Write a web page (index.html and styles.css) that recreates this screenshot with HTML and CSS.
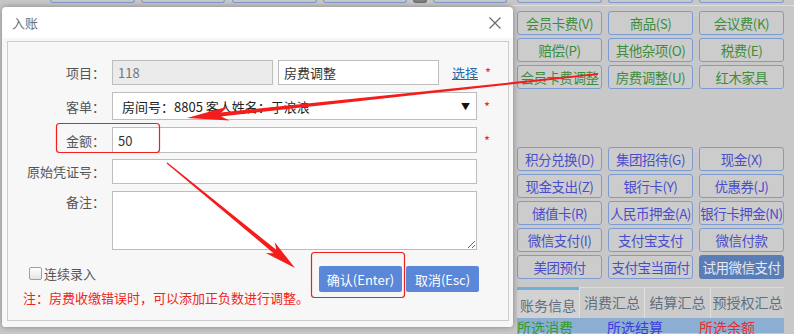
FILE: index.html
```html
<!DOCTYPE html>
<html lang="zh-CN">
<head>
    <meta charset="UTF-8">
    <meta name="viewport" content="width=device-width, initial-scale=1.0">
    <title>入账</title>
    <link rel="stylesheet" href="styles.css">
</head>
<body>
    <!-- Background app -->
    <div class="app">
        <div class="app-left">
            <div class="top-strip">
                <span class="stub w85"></span>
                <span class="stub w84"></span>
                <span class="stub w85 gap7"></span>
                <span class="stub w84"></span>
                <span class="stub dark"></span>
                <span class="stub w74"></span>
            </div>
        </div>

        <div class="app-right">
            <div class="stub-grid">
                <span class="stub"></span>
                <span class="stub"></span>
                <span class="stub"></span>
            </div>
            <div class="divider"></div>

            <div class="btn-grid green">
                <div class="pad-btn">会员卡费(V)</div>
                <div class="pad-btn">商品(S)</div>
                <div class="pad-btn">会议费(K)</div>
                <div class="pad-btn">赔偿(P)</div>
                <div class="pad-btn">其他杂项(O)</div>
                <div class="pad-btn">税费(E)</div>
                <div class="pad-btn">会员卡费调整</div>
                <div class="pad-btn">房费调整(U)</div>
                <div class="pad-btn">红木家具</div>
            </div>

            <div class="btn-grid blue pay-grid">
                <div class="pad-btn">积分兑换(D)</div>
                <div class="pad-btn">集团招待(G)</div>
                <div class="pad-btn">现金(X)</div>
                <div class="pad-btn">现金支出(Z)</div>
                <div class="pad-btn">银行卡(Y)</div>
                <div class="pad-btn">优惠券(J)</div>
                <div class="pad-btn">储值卡(R)</div>
                <div class="pad-btn">人民币押金(A)</div>
                <div class="pad-btn">银行卡押金(N)</div>
                <div class="pad-btn">微信支付(I)</div>
                <div class="pad-btn">支付宝支付</div>
                <div class="pad-btn">微信付款</div>
                <div class="pad-btn">美团预付</div>
                <div class="pad-btn">支付宝当面付</div>
                <div class="pad-btn trial">试用微信支付</div>
            </div>

            <div class="tabs">
                <div class="tab active">账务信息</div>
                <div class="tab t2">消费汇总</div>
                <div class="tab t3">结算汇总</div>
                <div class="tab t4">预授权汇总</div>
            </div>
            <div class="summary">
                <span class="sum-green">所选消费</span>
                <span class="sum-blue">所选结算</span>
                <span class="sum-red">所选余额</span>
            </div>
        </div>
    </div>

    <!-- Modal dialog -->
    <div class="dialog">
        <div class="dialog-head">
            <span class="dialog-title">入账</span>
            <svg class="close" width="12" height="12" viewBox="0 0 12 12">
                <path d="M0.5 0.5 L11.5 11.5 M11.5 0.5 L0.5 11.5" stroke="#6a6a6a" stroke-width="1.2" fill="none"/>
            </svg>
        </div>
        <div class="dialog-body">
            <div class="panel">
                <div class="row r1">
                    <label class="row-label">项目：</label>
                    <input class="field code" type="text" value="118" disabled>
                    <input class="field name" type="text" value="房费调整">
                    <a class="pick" href="#">选择</a>
                    <span class="req">*</span>
                </div>
                <div class="row r2">
                    <label class="row-label">客单：</label>
                    <div class="field select">
                        <span>房间号：8805 客人姓名：于浪浪</span>
                        <span class="caret">▼</span>
                    </div>
                    <span class="req">*</span>
                </div>
                <div class="row r3">
                    <label class="row-label">金额：</label>
                    <input class="field wide" type="text" value="50">
                    <span class="req">*</span>
                </div>
                <div class="row r4">
                    <label class="row-label">原始凭证号：</label>
                    <input class="field wide" type="text">
                </div>
                <div class="row r5">
                    <label class="row-label">备注：</label>
                    <textarea class="field wide memo"></textarea>
                </div>

                <div class="footer">
                    <div class="footer-left">
                        <label class="keep"><input type="checkbox" class="check">连续录入</label>
                        <p class="note">注：房费收缴错误时，可以添加正负数进行调整。</p>
                    </div>
                    <div class="actions">
                        <button class="action ok">确认(Enter)</button>
                        <button class="action cancel">取消(Esc)</button>
                    </div>
                </div>
            </div>
        </div>
    </div>

    <!-- Screenshot annotations -->
    <svg class="marks" width="794" height="334" viewBox="0 0 794 334">
        <rect x="56.5" y="123.5" width="103" height="29" rx="3" fill="none" stroke="#f21f1f" stroke-width="1.2"/>
        <rect x="311.5" y="252.5" width="93" height="45" rx="3" fill="none" stroke="#f21f1f" stroke-width="1.2"/>
        <polygon fill="#f51c1c" points="598.1,74.7 221,116.4 229.5,120.5 187,118 228.1,106.5 220.6,112.4 597.9,73.3"/>
        <polygon fill="#f51c1c" points="166.6,163.5 273.5,253.2 265.9,253.1 295,268 274.7,242.3 276.3,249.8 167.4,162.5"/>
    </svg>
</body>
</html>
```

FILE: styles.css
```css
/* Global */
* {
    margin: 0;
    padding: 0;
    box-sizing: border-box;
}

:root {
    --app-bg: #c8c8c8;
    --pad-border: #7d9bd0;
    --field-border: #bdbdbd;
    --label: #555;
    --red: #f02424;
}

body {
    width: 794px;
    height: 334px;
    overflow: hidden;
    position: relative;
    background-color: var(--app-bg);
    font-family: "Noto Sans CJK SC", sans-serif;
    font-size: 13px;
    color: #333;
}

/* Background app */
.app {
    display: flex;
    height: 334px;
}

.app-left {
    width: 512px;
}

.app-right {
    width: 282px;
    padding-left: 5px;
}

.top-strip {
    display: flex;
    gap: 6px;
    padding-left: 50px;
}

.stub {
    display: block;
    height: 3px;
    border: 1px solid var(--pad-border);
    border-top: none;
    border-radius: 0 0 3px 3px;
}

.w85 { width: 85px; }
.w84 { width: 84px; }
.w74 { width: 74px; }
.gap7 { margin-left: 1px; }

.stub.dark {
    width: 14px;
    background-color: #808080;
    border-color: #6c6c6c;
}

.stub-grid {
    display: grid;
    grid-template-columns: repeat(3, 85px);
    column-gap: 6px;
}

.divider {
    height: 1px;
    margin: 2px 0 0 -5px;
    background-color: #dedede;
}

.btn-grid {
    display: grid;
    grid-template-columns: repeat(3, 85px);
    grid-auto-rows: 24px;
    gap: 3px 6px;
    margin-top: 5px;
}

.pay-grid {
    margin-top: 58px;
}

.pad-btn {
    display: flex;
    justify-content: center;
    border: 1px solid var(--pad-border);
    border-radius: 3px;
    background-color: #cccccc;
    font-size: 13.5px;
    line-height: 22px;
    white-space: nowrap;
    letter-spacing: -0.5px;
}

.green .pad-btn { color: #3c8c3c; }
.blue .pad-btn { color: #4a4ecb; }

.blue .pad-btn.trial {
    background-color: #5b7db6;
    border-color: #5b7db6;
    color: #e6e8f4;
}

.tabs {
    display: flex;
    width: 267px;
    height: 31px;
    margin-top: 8px;
    border-top: 1px solid #dcdcdc;
}

.tab {
    border-left: 1px solid #e0e0e0;
    background-color: #cbcbcb;
    color: #5f6f7f;
    font-size: 14px;
    line-height: 29px;
    text-align: center;
    white-space: nowrap;
}

.tab.active {
    width: 62px;
    margin-top: -1px;
    border-top: 3px solid #6eb0d6;
    border-left: none;
    background-color: #d2d2d2;
    line-height: 31px;
}

.t2 { width: 65px; }
.t3 { width: 66px; }
.t4 { width: 74px; }

.summary {
    display: flex;
    width: 267px;
    height: 15px;
    background-color: #8caed3;
    font-size: 14px;
    line-height: 19px;
}

.summary span { white-space: nowrap; }
.sum-green { width: 90px; color: #2f9a2f; }
.sum-blue { width: 92px; color: #3c3ce0; }
.sum-red { color: #e23030; }

/* Dialog */
.dialog {
    position: absolute;
    left: 2px;
    top: 7px;
    width: 511px;
    height: 320px;
    background-color: #fff;
    border-radius: 4px;
    box-shadow: 0 0 6px rgba(0, 0, 0, 0.35);
    overflow: hidden;
}

.dialog-head {
    display: flex;
    justify-content: space-between;
    align-items: center;
    height: 31px;
    padding: 0 12px 0 10px;
}

.dialog-title {
    color: #707070;
    font-size: 13px;
}

.dialog-body {
    padding: 3px 4px 6px 5px;
    background-color: #f7f7f7;
}

.panel {
    height: 280px;
    padding-top: 18px;
    border: 1px solid #cccccc;
    background-color: #f7f7f7;
}

.row {
    display: flex;
    align-items: center;
}

.r1 { height: 25px; }
.r2 { height: 28px; margin-top: 7px; }
.r3 { height: 26px; margin-top: 7px; }
.r4 { height: 25px; margin-top: 6px; }
.r5 { height: 59px; margin-top: 7px; align-items: flex-start; }

.row-label {
    width: 97px;
    margin-right: 7px;
    text-align: right;
    color: var(--label);
    white-space: nowrap;
}

.r5 .row-label { padding-top: 1px; }

.field {
    height: 100%;
    padding: 0 5px;
    border: 1px solid var(--field-border);
    background-color: #fff;
    font-family: inherit;
    font-size: 13px;
    color: #333;
    outline: none;
}

.field.code {
    width: 161px;
    background-color: #ebebeb;
    color: #777;
}

.field.name {
    width: 161px;
    margin-left: 5px;
}

.field.wide {
    width: 365px;
}

.field.select {
    display: flex;
    justify-content: space-between;
    align-items: center;
    width: 365px;
    padding: 0 6px 0 9px;
    color: #222;
}

.caret {
    font-size: 9px;
    color: #111;
}

.memo {
    resize: both;
}

.pick {
    margin-left: 13px;
    color: #1e6aa8;
    text-decoration: underline;
}

.req {
    margin-left: 7px;
    color: var(--red);
    font-size: 13px;
}

.footer {
    display: flex;
    margin-top: 16px;
}

.footer-left {
    flex-grow: 1;
}

.keep {
    display: flex;
    align-items: center;
    height: 14px;
    padding-left: 17px;
    color: var(--label);
}

.check {
    appearance: none;
    width: 13px;
    height: 13px;
    margin: 0 2px 0 4px;
    border: 1px solid #a0a0a0;
    border-radius: 2px;
    background: linear-gradient(#ffffff, #e4e4e4);
}

.note {
    margin-top: 9px;
    padding-left: 15px;
    color: var(--red);
    line-height: 18px;
}

.actions {
    display: flex;
    gap: 4px;
    margin-right: 29px;
}

.action {
    height: 26px;
    border: none;
    border-radius: 2px;
    background-color: #5b87d9;
    color: #fff;
    font-family: inherit;
    font-size: 13px;
}

.action.ok { width: 83px; }
.action.cancel { width: 73px; }

/* Annotations */
.marks {
    position: absolute;
    left: 0;
    top: 0;
    pointer-events: none;
}
```
